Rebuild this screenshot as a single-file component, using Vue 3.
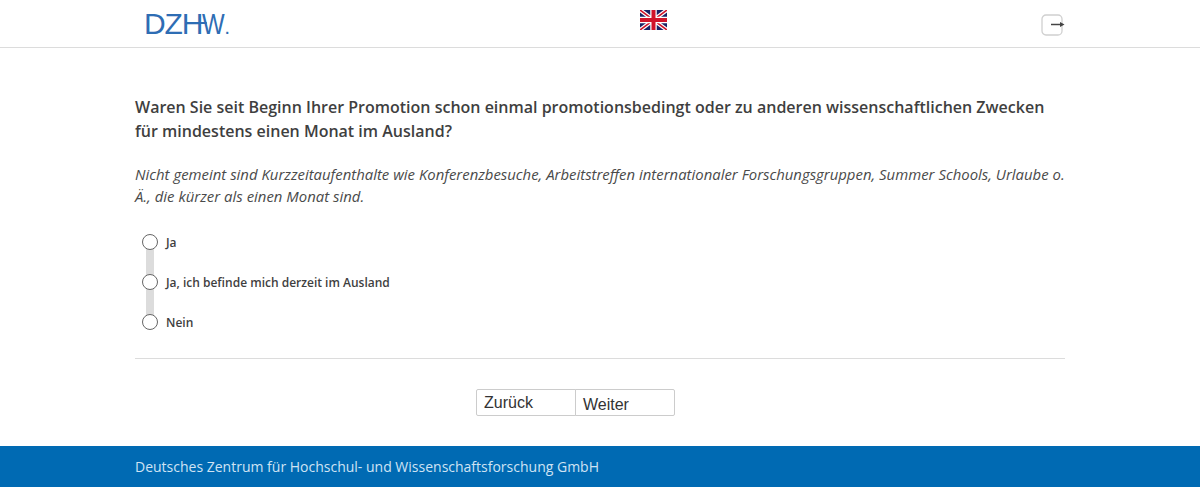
<template>
  <div class="page">
    <header class="topbar">
      <div class="logo">
        <span>DZH</span><span class="logo-w">W</span><span class="logo-dot">.</span>
      </div>
      <svg class="flag" viewBox="0 0 27 20" aria-label="English">
        <rect width="27" height="20" fill="#1a2366" />
        <path d="M0 0L27 20M27 0L0 20" stroke="#fff" stroke-width="4" />
        <path d="M0 0L27 20M27 0L0 20" stroke="#d0142a" stroke-width="1.6" />
        <path d="M13.5 0V20M0 10H27" stroke="#fff" stroke-width="6.5" />
        <path d="M13.5 0V20M0 10H27" stroke="#d0142a" stroke-width="4" />
      </svg>
      <svg class="exit" viewBox="0 0 24 22" fill="none" aria-label="Abmelden">
        <rect x="1" y="1" width="20" height="20" rx="4" stroke="#d0d0d0" stroke-width="1.3" />
        <path d="M10 10.5H20" stroke="#444" stroke-width="1.5" />
        <path d="M19 8L23.5 10.5L19 13Z" fill="#444" />
      </svg>
    </header>

    <main class="content">
      <h1 class="question">
        Waren Sie seit Beginn Ihrer Promotion schon einmal promotionsbedingt oder zu anderen wissenschaftlichen Zwecken
        für mindestens einen Monat im Ausland?
      </h1>
      <p class="hint">
        Nicht gemeint sind Kurzzeitaufenthalte wie Konferenzbesuche, Arbeitstreffen internationaler Forschungsgruppen,
        Summer Schools, Urlaube o. Ä., die kürzer als einen Monat sind.
      </p>

      <ul class="options">
        <li v-for="opt in options" :key="opt" class="option">
          <span class="radio"></span>
          <span class="label">{{ opt }}</span>
        </li>
      </ul>

      <hr class="rule" />

      <div class="nav">
        <button type="button" class="btn back">Zurück</button>
        <button type="button" class="btn next">Weiter</button>
      </div>
    </main>

    <footer class="footer">
      <span>Deutsches Zentrum für Hochschul- und Wissenschaftsforschung GmbH</span>
    </footer>
  </div>
</template>

<script setup>
const options = ["Ja", "Ja, ich befinde mich derzeit im Ausland", "Nein"];
</script>

<style>
html, body { background: #fff; }
</style>

<style scoped>
.page { height: 496px; display: flex; flex-direction: column; font-family: "Open Sans", sans-serif; color: #3f3f3f; overflow: hidden; }
.topbar { position: relative; height: 47px; border-bottom: 1px solid #dcdcdc; flex: none; }
.logo { position: absolute; left: 144px; top: 7px; display: flex; align-items: baseline; color: #2e6db4; font-family: "Liberation Sans", sans-serif; font-size: 30px; line-height: 34px; letter-spacing: -1.1px; }
.logo-w { position: relative; display: inline-block; width: 23px; transform: scaleX(0.8); transform-origin: left; }
.logo-w::before { content: ""; position: absolute; left: -8px; top: 15px; width: 14px; height: 2px; background: #2e6db4; }
.logo-dot { font-size: 14px; font-weight: 700; letter-spacing: 0; }
.flag { position: absolute; left: 640px; top: 10px; width: 27px; height: 20px; }
.exit { position: absolute; left: 1041px; top: 14px; width: 24px; height: 22px; }
.content { width: 930px; margin: 0 auto; padding-top: 47px; flex: none; }
.question { margin: 0; font-size: 16px; line-height: 24px; font-weight: 600; color: #3f3f3f; }
.hint { margin: 20px 0 0; font-size: 14.9px; word-spacing: 0.09px; line-height: 22px; font-style: italic; color: #4a4a4a; }
.options { list-style: none; margin: 15px 0 0; padding: 0 0 0 7px; position: relative; }
.options::before { content: ""; position: absolute; left: 11px; top: 20px; width: 8px; height: 80px; background: #dcdcdc; }
.option { position: relative; display: flex; align-items: center; height: 40px; }
.radio { width: 14px; height: 14px; border: 1px solid #666; border-radius: 50%; background: #fff; flex: none; }
.label { margin-left: 8px; font-size: 12px; font-weight: 600; color: #3f3f3f; }
.rule { margin: 16px 0 0; border: 0; border-top: 1px solid #dcdcdc; }
.nav { display: flex; justify-content: center; margin-top: 30px; padding-right: 49px; }
.btn { width: 100px; height: 27px; padding: 0 7px; background: #fff; border: 1px solid #ccc; font-family: "Liberation Sans", sans-serif; font-size: 16px; color: #333; text-align: left; }
.back { border-radius: 2px 0 0 2px; padding-bottom: 0; }
.next { margin-left: -1px; border-radius: 0 2px 2px 0; padding-top: 4px; }
.footer { margin-top: 30px; height: 41px; flex: none; background: #006ab3; color: #cfe3f3; font-size: 14px; display: flex; align-items: center; padding-left: 135px; }
</style>
